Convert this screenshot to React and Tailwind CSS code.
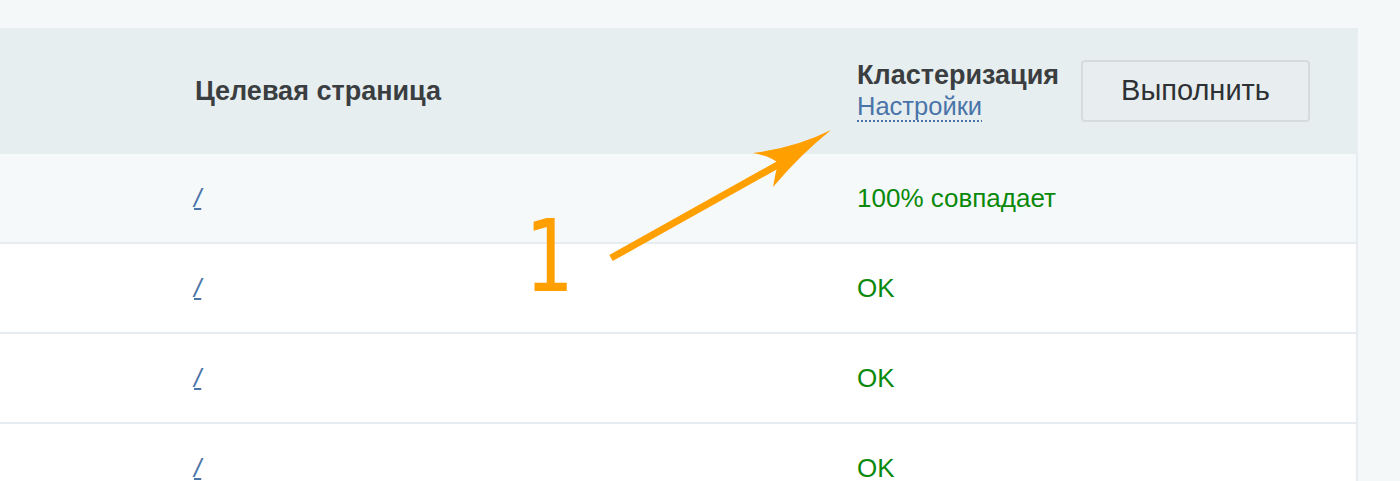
import React from "react";

const rows = [
  { status: "100% совпадает", bg: "bg-[#f5f9fa]" },
  { status: "OK", bg: "bg-white" },
  { status: "OK", bg: "bg-white" },
  { status: "OK", bg: "bg-white" },
];

export default function App() {
  return (
    <div
      className="relative h-[481px] w-[1400px] overflow-hidden bg-[#f5f8f9]"
      style={{ fontFamily: '"Liberation Sans", Arial, sans-serif' }}
    >
      <div className="h-[28px]" />
      <div className="w-[1358px] border-r-2 border-[#e6ecef]">
        {/* header */}
        <div className="mr-[-2px] flex h-[126px] items-center bg-[#e7eef0]">
          <div className="w-[195px]" />
          <div className="w-[662px] text-[27px] font-bold text-[#3b3e41]">Целевая страница</div>
          <div className="flex flex-col leading-[31px]">
            <span className="text-[27px] font-bold text-[#3b3e41]">Кластеризация</span>
            <span className="self-start text-[25.5px] text-[#4a74a8] underline decoration-dotted decoration-[#4a74a8] decoration-2 underline-offset-[5px]">
              Настройки
            </span>
          </div>
          <button className="ml-[22px] flex h-[62px] w-[229px] items-center justify-center rounded-[4px] border-2 border-[#d6dbde] bg-[#e8eef0] text-[29px] text-[#2e3134]">
            Выполнить
          </button>
        </div>
        {rows.map((r, i) => (
          <div key={i} className={`flex h-[90px] items-center border-b-2 border-[#e6ecef] ${r.bg}`}>
            <div className="w-[194px]" />
            <a className="w-[663px] text-[26px] italic text-[#4a74a8] underline decoration-2 underline-offset-[1px]">
              /
            </a>
            <span className="text-[26px] text-[#0a890a]">{r.status}</span>
          </div>
        ))}
      </div>

      {/* annotation */}
      <div
        className="absolute left-[518px] top-[207px] w-[60px] origin-center scale-x-[0.8] text-[100px] leading-none text-[#ff9f00]"
        style={{ fontFamily: '"DejaVu Sans Mono", monospace' }}
      >
        1
      </div>
      <svg className="absolute left-0 top-0" width="1400" height="481" viewBox="0 0 1400 481">
        <line x1="611" y1="258" x2="790" y2="158" stroke="#ff9f00" strokeWidth="7" />
        <path d="M831 130 Q795 148 753 153 Q770 156 778 163 Q775 175 773 187 Q800 155 831 130 Z" fill="#ff9f00" />
      </svg>
    </div>
  );
}
